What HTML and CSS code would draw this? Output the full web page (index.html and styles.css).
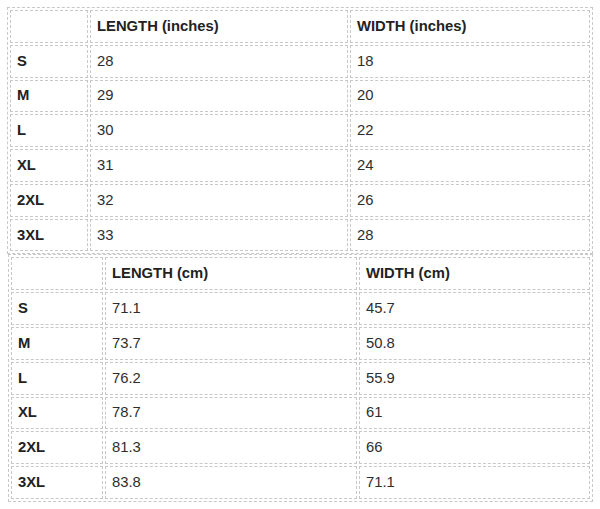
FILE: index.html
```html
<!DOCTYPE html>
<html>
<head>
<meta charset="utf-8">
<link rel="stylesheet" href="styles.css">
</head>
<body>
<table class="size-table t-in">
  <colgroup><col class="c1"><col class="c2"><col class="c3"></colgroup>
  <tr><th></th><th>LENGTH (inches)</th><th>WIDTH (inches)</th></tr>
  <tr><th>S</th><td>28</td><td>18</td></tr>
  <tr><th>M</th><td>29</td><td>20</td></tr>
  <tr><th>L</th><td>30</td><td>22</td></tr>
  <tr><th>XL</th><td>31</td><td>24</td></tr>
  <tr><th>2XL</th><td>32</td><td>26</td></tr>
  <tr><th>3XL</th><td>33</td><td>28</td></tr>
</table>
<table class="size-table t-cm">
  <colgroup><col class="c1"><col class="c2"><col class="c3"></colgroup>
  <tr><th></th><th>LENGTH (cm)</th><th>WIDTH (cm)</th></tr>
  <tr><th>S</th><td>71.1</td><td>45.7</td></tr>
  <tr><th>M</th><td>73.7</td><td>50.8</td></tr>
  <tr><th>L</th><td>76.2</td><td>55.9</td></tr>
  <tr><th>XL</th><td>78.7</td><td>61</td></tr>
  <tr><th>2XL</th><td>81.3</td><td>66</td></tr>
  <tr><th>3XL</th><td>83.8</td><td>71.1</td></tr>
</table>
</body>
</html>
```
FILE: styles.css
```css
html, body {
  margin: 0;
  padding: 0;
  background: #ffffff;
}
body {
  padding: 7px 8px 0 7px;
  font-family: "Liberation Sans", Arial, sans-serif;
  font-size: 14.8px;
  color: #2e2e2e;
}
.size-table {
  border: 1px dashed #c8c8c8;
  border-collapse: separate;
  border-spacing: 2px;
  table-layout: fixed;
}
.size-table th,
.size-table td {
  border: 1px dashed #c8c8c8;
  padding: 6.9px 6px;
  line-height: 17px;
  text-align: left;
  vertical-align: middle;
}
.size-table th {
  font-weight: bold;
  color: #222222;
}
.size-table td {
  font-weight: normal;
}
.t-in {
  width: 586px;
}
.t-in .c1 { width: 78px; }
.t-in .c2 { width: 258px; }
.t-in .c3 { width: 240px; }
.t-cm {
  width: 585px;
  margin-left: 1px;
}
.t-cm .c1 { width: 92px; }
.t-cm .c2 { width: 252px; }
.t-cm .c3 { width: 231px; }
```
